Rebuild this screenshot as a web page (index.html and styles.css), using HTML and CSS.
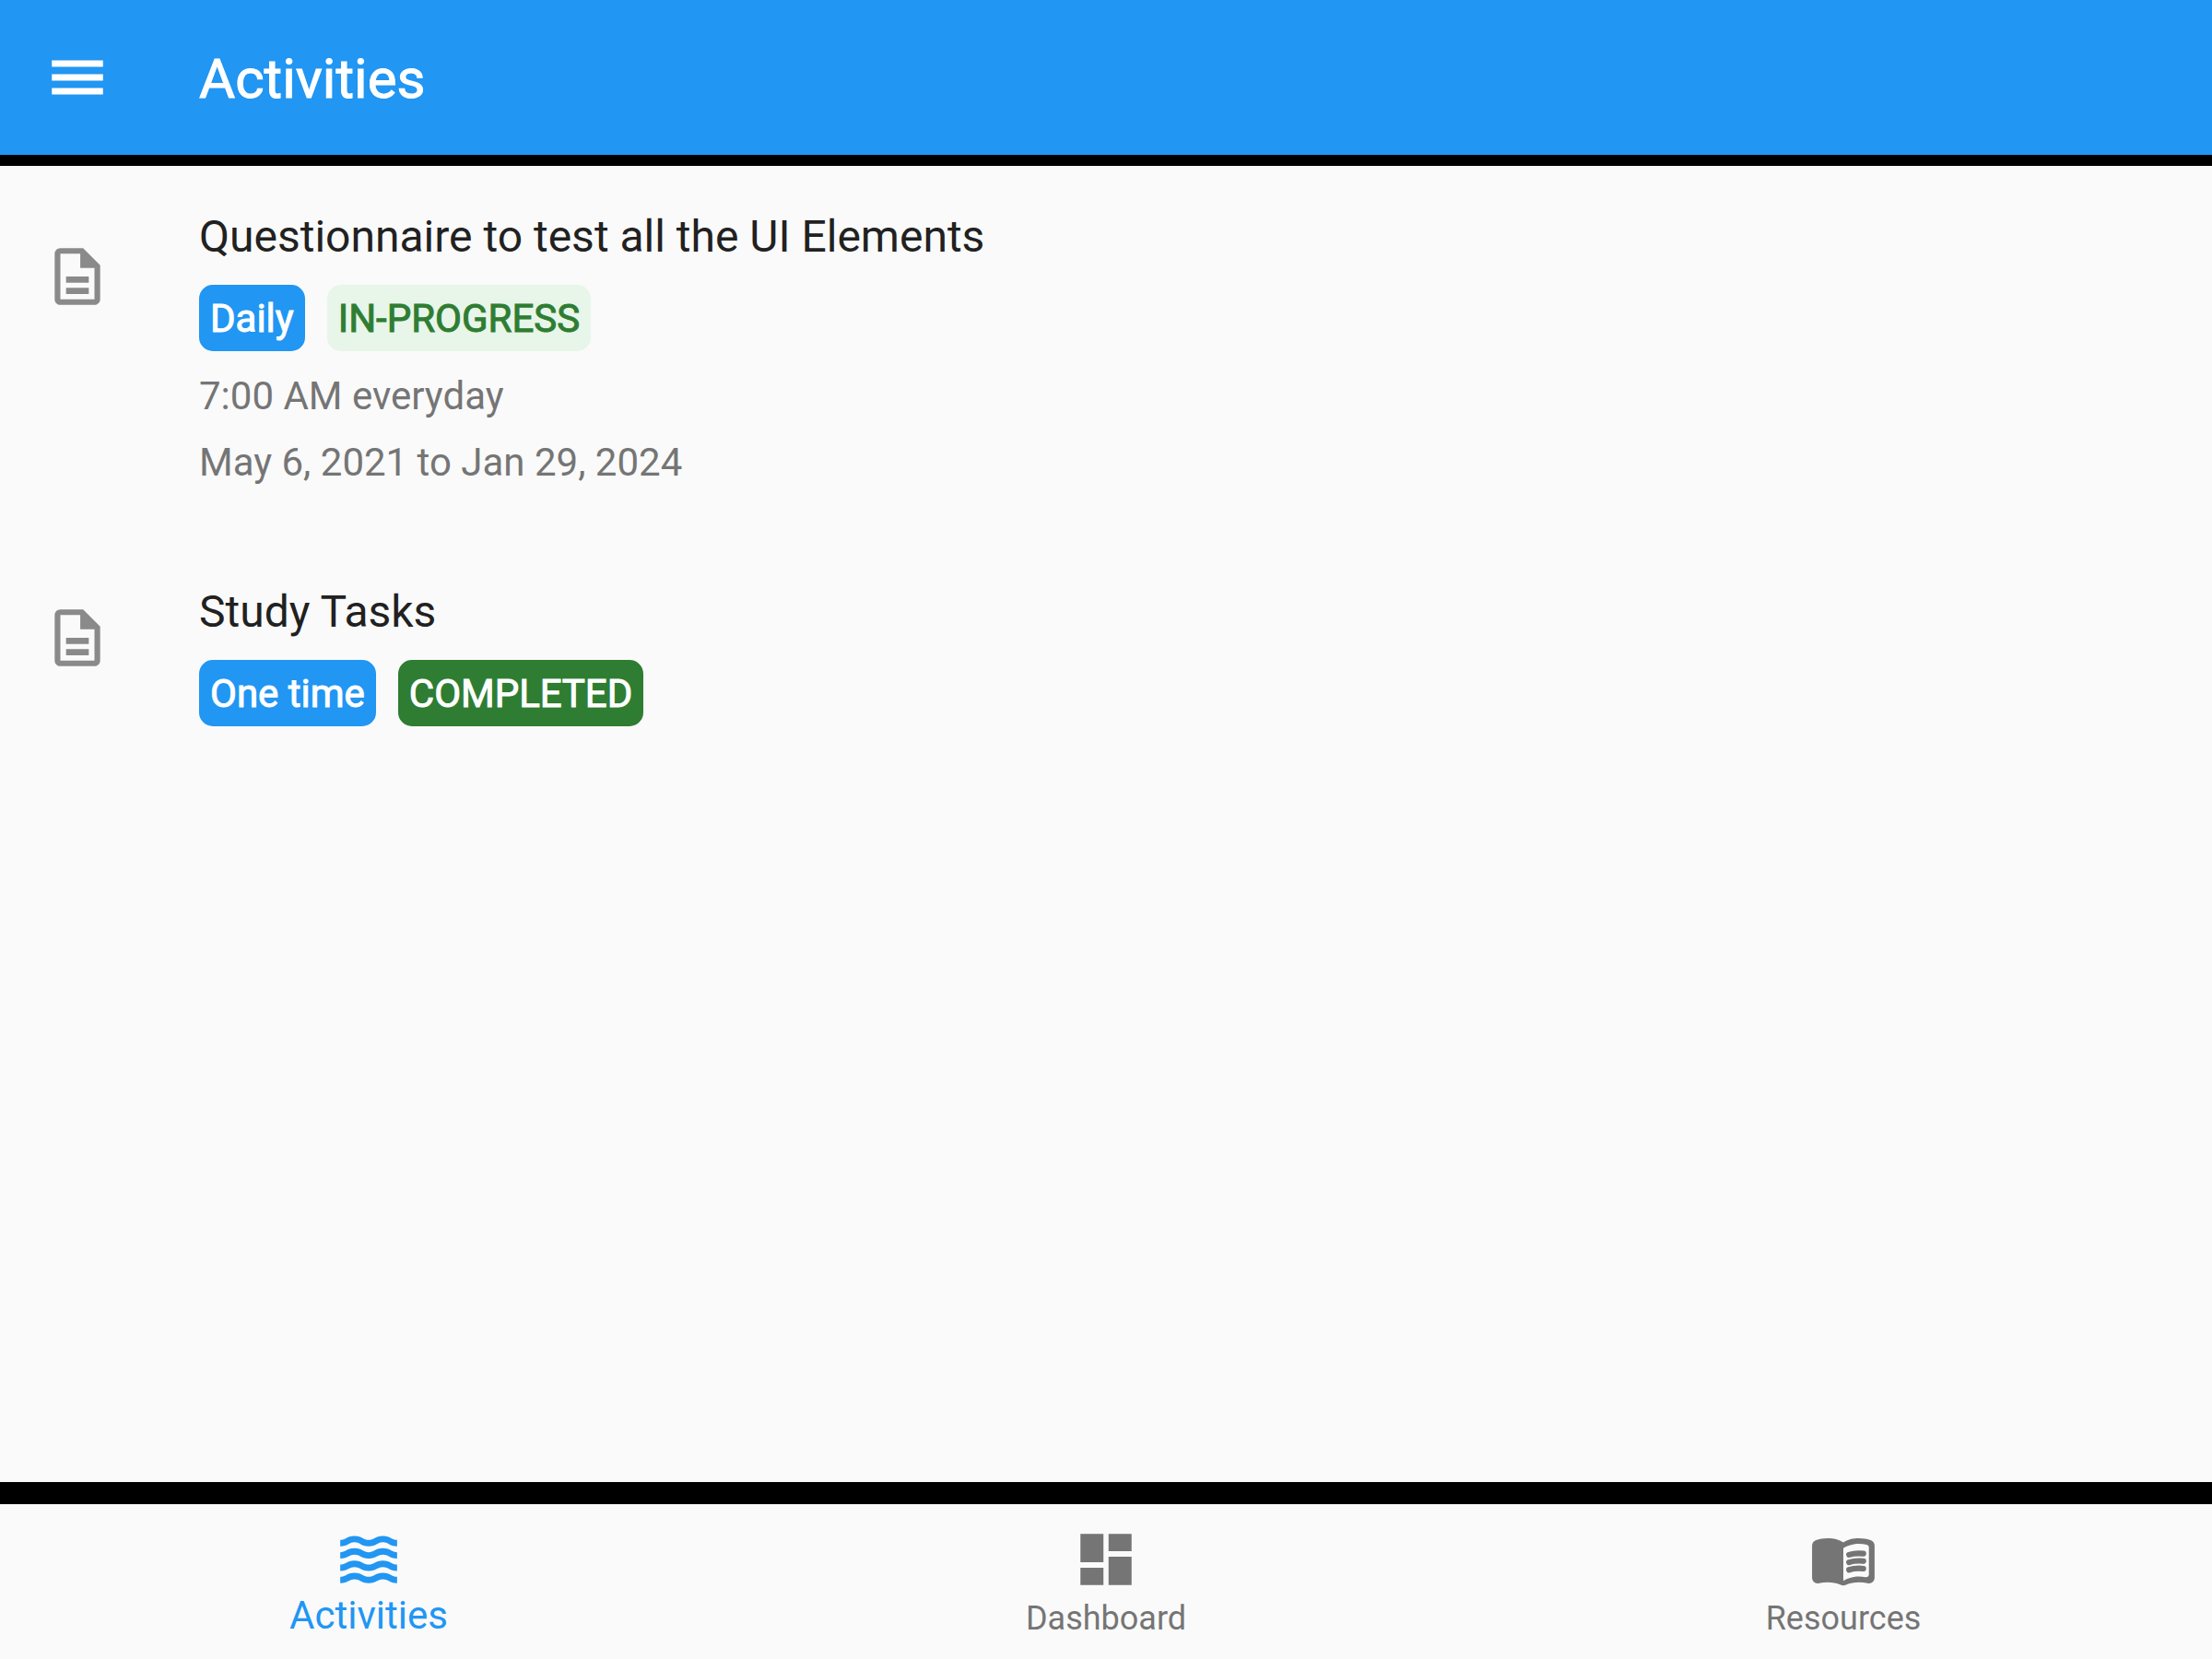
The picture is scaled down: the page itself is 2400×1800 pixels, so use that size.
FILE: index.html
```html
<!DOCTYPE html>
<html lang="en">
<head>
  <meta charset="utf-8">
  <meta name="viewport" content="width=device-width, initial-scale=1">
  <title>Activities</title>
  <link rel="stylesheet" href="styles.css">
</head>
<body>
  <header class="app-bar">
    <button class="menu-button" type="button" aria-label="Open menu">
      <svg class="icon" viewBox="0 0 24 24" aria-hidden="true"><path d="M3 18h18v-2.300H3V18zm0-4.850h18v-2.300H3v2.300zM3 6v2.300h18V6H3z"/></svg>
    </button>
    <h1 class="app-title">Activities</h1>
  </header>

  <main class="content">
    <ul class="activity-list">
      <li class="activity">
        <svg class="icon activity-icon" viewBox="0 0 24 24" aria-hidden="true"><path d="M8 16h8v2.200H8zm0-4h8v2.200H8zm6-10H6c-1.100 0-2 .900-2 2v16c0 1.100.890 2 1.990 2H18c1.100 0 2-.900 2-2V8l-6-6zm4 18H6V4h7v5h5v11z"/></svg>
        <div class="activity-body">
          <h2 class="activity-title">Questionnaire to test all the UI Elements</h2>
          <div class="badges">
            <span class="badge badge-schedule">Daily</span>
            <span class="badge badge-progress">IN-PROGRESS</span>
          </div>
          <p class="activity-detail">7:00 AM everyday</p>
          <p class="activity-detail">May 6, 2021 to Jan 29, 2024</p>
        </div>
      </li>
      <li class="activity activity-compact">
        <svg class="icon activity-icon" viewBox="0 0 24 24" aria-hidden="true"><path d="M8 16h8v2.200H8zm0-4h8v2.200H8zm6-10H6c-1.100 0-2 .900-2 2v16c0 1.100.890 2 1.990 2H18c1.100 0 2-.900 2-2V8l-6-6zm4 18H6V4h7v5h5v11z"/></svg>
        <div class="activity-body">
          <h2 class="activity-title">Study Tasks</h2>
          <div class="badges">
            <span class="badge badge-schedule">One time</span>
            <span class="badge badge-completed">COMPLETED</span>
          </div>
        </div>
      </li>
    </ul>
  </main>

  <nav class="bottom-nav" aria-label="Main">
    <a class="nav-item nav-item-active" href="#activities" aria-current="page">
      <svg class="icon" viewBox="0 0 24 24" aria-hidden="true">
        <defs>
          <path id="wave" d="M17 0c-1.350 0-2.200.420-2.950.800-.650.330-1.180.600-2.050.600-.900 0-1.400-.250-2.050-.600C9.200.420 8.380 0 7 0s-2.200.420-2.950.800c-.650.330-1.170.600-2.050.600v2.250c1.350 0 2.200-.420 2.950-.800.650-.330 1.170-.600 2.050-.600s1.400.250 2.050.600c.750.380 1.570.800 2.950.800s2.200-.420 2.950-.800c.650-.330 1.180-.600 2.050-.600.900 0 1.400.250 2.050.600.750.380 1.580.800 2.950.800V1.400c-.900 0-1.400-.250-2.050-.600C19.200.420 18.350 0 17 0z"/>
        </defs>
        <use href="#wave" y="3.700"/><use href="#wave" y="8.050"/><use href="#wave" y="12.400"/><use href="#wave" y="16.700"/>
      </svg>
      <span class="nav-label">Activities</span>
    </a>
    <a class="nav-item" href="#dashboard">
      <svg class="icon" viewBox="0 0 24 24" aria-hidden="true"><path d="M3 13h8.100V3H3v10zm0 8h8.100v-6.100H3V21zm9.900 0H21V11h-8.100v10zm0-18v6.100H21V3h-8.100z"/></svg>
      <span class="nav-label">Dashboard</span>
    </a>
    <a class="nav-item" href="#resources">
      <svg class="icon" viewBox="0 0 24 24" aria-hidden="true"><path d="M17.500 4.500c-1.950 0-4.050.400-5.500 1.500-1.450-1.100-3.550-1.500-5.500-1.500-1.450 0-2.990.220-4.280.790C1.490 5.620 1 6.330 1 7.140v11.280c0 1.300 1.220 2.260 2.480 1.940.980-.250 2.020-.360 3.020-.360 1.560 0 3.220.260 4.560.920.600.300 1.280.300 1.870 0 1.340-.670 3-.920 4.560-.920 1 0 2.040.110 3.020.360 1.260.330 2.480-.630 2.480-1.940V7.140c0-.810-.490-1.520-1.220-1.850-1.280-.570-2.820-.790-4.270-.790zM21 17.230c0 .630-.580 1.090-1.200.980-.750-.140-1.530-.200-2.300-.200-1.700 0-4.150.650-5.500 1.500V8c1.350-.850 3.800-1.500 5.500-1.500.920 0 1.830.090 2.700.280.460.100.800.510.800.980z"/><path class="book-lines" d="M14 10.350c1.500-.48 3.300-.6 5.050-.42M14 13c1.500-.48 3.300-.6 5.050-.42M14 15.650c1.500-.48 3.300-.6 5.050-.42"/></svg>
      <span class="nav-label">Resources</span>
    </a>
  </nav>
</body>
</html>
```
FILE: styles.css
```css
* {
  box-sizing: border-box;
}

body {
  margin: 0;
  min-height: 100vh;
  display: flex;
  flex-direction: column;
  background: #fafafa;
  color: #212121;
  font-family: Roboto, "Liberation Sans", sans-serif;
}

h1,
h2,
p,
ul {
  margin: 0;
  padding: 0;
  font-weight: 400;
}

.icon {
  display: block;
  flex: none;
  width: 74px;
  height: 74px;
  fill: currentColor;
}

/* Top bar */
.app-bar {
  display: flex;
  align-items: center;
  height: 180px;
  border-bottom: 12px solid #000;
  background: #2196f3;
  color: #fff;
}

.menu-button {
  display: flex;
  align-items: center;
  justify-content: center;
  width: 168px;
  height: 168px;
  margin-right: 48px;
  padding: 0;
  border: 0;
  background: none;
  color: inherit;
}

.app-title {
  padding-top: 4px;
  font-size: 60px;
  line-height: 72px;
  -webkit-text-stroke: 1px currentColor;
}

/* Activity list */
.content {
  flex: 1;
  padding-top: 48px;
}

.activity-list {
  display: flex;
  flex-direction: column;
  gap: 97px;
  list-style: none;
}

.activity {
  display: flex;
  align-items: flex-start;
  padding: 0 48px 0 47px;
}

.activity-icon {
  margin: 35px 95px 0 0;
  color: #8a8a8a;
}

.activity-compact .activity-icon {
  margin-top: 20px;
}

.activity-title {
  font-size: 48px;
  line-height: 57px;
}

.badges {
  display: flex;
  flex-wrap: wrap;
  gap: 24px;
  padding: 24px 0 13px;
}

.badge {
  padding: 2px 12px 0;
  border-radius: 15px;
  font-size: 42px;
  line-height: 70px;
  font-kerning: none;
  -webkit-text-stroke: 1px currentColor;
}

.badge-schedule {
  background: #2196f3;
  color: #fff;
}

.badge-progress {
  background: #e8f5e9;
  color: #2e7d32;
}

.badge-completed {
  background: #2e7d32;
  color: #fff;
}

.activity-detail {
  color: #757575;
  font-size: 42px;
  line-height: 72px;
}

/* Bottom navigation */
.bottom-nav {
  display: grid;
  grid-template-columns: repeat(3, 1fr);
  border-top: 24px solid #000;
}

.nav-item {
  display: flex;
  flex-direction: column;
  align-items: center;
  height: 168px;
  padding-top: 23px;
  color: #757575;
  text-decoration: none;
}

.nav-label {
  font-size: 36px;
  line-height: 54px;
}

.nav-item-active {
  color: #2196f3;
}

.nav-item-active .nav-label {
  font-size: 42px;
  line-height: 48px;
}

.book-lines {
  fill: none;
  stroke: currentColor;
  stroke-width: 2;
  stroke-linecap: round;
}
```
